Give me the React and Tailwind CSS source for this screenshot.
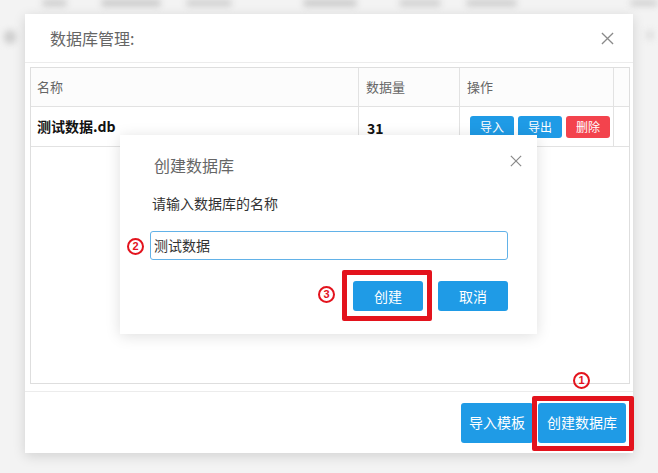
import React from "react";

const cjk = { fontFamily: '"Noto Sans CJK SC", "Noto Sans", sans-serif' };

function CloseIcon({ size = 14 }) {
  return (
    <svg width={size} height={size} viewBox="0 0 14 14" fill="none" stroke="#8a8a8a" strokeWidth="1.4">
      <path d="M1 1L13 13M13 1L1 13" />
    </svg>
  );
}

function SmallButton({ children, danger }) {
  return (
    <button
      className={`h-[22px] w-[44px] rounded-[3px] text-[12px] text-white leading-none ${
        danger ? "bg-[#f3434d]" : "bg-[#1f9be6]"
      }`}
    >
      {children}
    </button>
  );
}

// red annotation frame drawn over a control
function Mark({ className }) {
  return <div className={`absolute border-[5px] border-[#e3131d] rounded-[2px] pointer-events-none ${className}`} />;
}

// circled step number
function Step({ children, className }) {
  return (
    <span
      className={`absolute w-[17px] h-[17px] rounded-full border-2 border-[#e3131d] flex items-center justify-center text-[11px] font-bold leading-none text-[#e3131d] ${className}`}
      style={{ fontFamily: '"Liberation Sans", Arial, sans-serif' }}
    >
      {children}
    </span>
  );
}

export default function App() {
  return (
    <div className="relative w-[658px] h-[473px] overflow-hidden bg-[#f3f3f3]" style={cjk}>
      {/* blurred page behind the dialog */}
      <div className="flex flex-col gap-[22px] blur-[3px]">
        <div className="flex items-start h-[8px]">
          <div className="ml-[42px] w-[25px] h-[6px] bg-[#c9c9c9] rounded" />
          <div className="ml-[34px] w-[60px] h-[6px] bg-[#c4c4c4] rounded" />
          <div className="ml-[25px] w-[46px] h-[6px] bg-[#cbcbcb] rounded" />
          <div className="ml-[71px] w-[55px] h-[6px] bg-[#c4c4c4] rounded" />
          <div className="ml-[42px] w-[42px] h-[6px] bg-[#cbcbcb] rounded" />
          <div className="ml-[25px] w-[51px] h-[6px] bg-[#c9c9c9] rounded" />
          <div className="ml-[113px] w-[28px] h-[6px] bg-[#cfcfcf] rounded" />
        </div>
        <div className="flex justify-between px-[4px]">
          <div className="w-[12px] h-[14px] bg-[#cdcdcd] rounded-full" />
          <div className="w-[8px] h-[10px] bg-[#dedede] rounded-full" />
        </div>
      </div>

      {/* database manager window */}
      <div className="absolute left-[25px] top-[14px] w-[608px] h-[439px] bg-white flex flex-col shadow-[0_3px_12px_rgba(0,0,0,0.14)]">
        <div className="h-[49px] shrink-0 flex items-center justify-between pl-[25px] pr-[19px] border-b border-[#ececec]">
          <span className="text-[16px] text-[#666]">数据库管理:</span>
          <CloseIcon size={13} />
        </div>

        <div className="flex-1 pt-[4px] pb-[7px] pl-[5px] pr-[3px]">
          <div className="h-full border border-[#dedede] text-[13px]">
            <div className="flex h-[39px] border-b border-[#e2e2e2] text-[#666] bg-[#fcfcfc]">
              <div className="w-[328px] flex items-center pl-[6px] border-r border-[#e2e2e2]">名称</div>
              <div className="w-[101px] flex items-center pl-[7px] border-r border-[#e2e2e2]">数据量</div>
              <div className="w-[154px] flex items-center pl-[7px] border-r border-[#e2e2e2]">操作</div>
              <div className="flex-1" />
            </div>
            <div className="flex h-[40px] border-b border-[#e2e2e2] font-bold text-[#111]">
              <div className="w-[328px] flex items-center pl-[6px] border-r border-[#e2e2e2] text-[14px]">测试数据.db</div>
              <div className="w-[101px] flex items-center pl-[8px] pt-[3px] border-r border-[#e2e2e2] text-[14px]">31</div>
              <div className="w-[154px] flex items-center gap-[4px] pl-[10px] border-r border-[#e2e2e2] font-normal">
                <SmallButton>导入</SmallButton>
                <SmallButton>导出</SmallButton>
                <SmallButton danger>删除</SmallButton>
              </div>
              <div className="flex-1" />
            </div>
          </div>
        </div>

        <div className="h-[62px] shrink-0 border-t border-[#ececec] flex items-center justify-end gap-[5px] pr-[7px] text-[14px] text-white">
          <button className="h-[40px] w-[72px] rounded-[3px] bg-[#1f9be6]">导入模板</button>
          <button className="h-[40px] w-[88px] rounded-[3px] bg-[#1f9be6]">创建数据库</button>
        </div>
      </div>

      {/* create database prompt */}
      <div className="absolute left-[120px] top-[135px] w-[417px] h-[199px] bg-white flex flex-col shadow-[0_2px_14px_rgba(0,0,0,0.13)]">
        <div className="flex items-start justify-between pl-[34px] pr-[15px] pt-[19px]">
          <span className="text-[16px] text-[#666] leading-[22px]">创建数据库</span>
          <div className="pt-[1px]">
            <CloseIcon size={12} />
          </div>
        </div>
        <div className="pl-[32px] pt-[17px] text-[14px] text-[#333] leading-[20px]">请输入数据库的名称</div>
        <div className="pl-[30px] pt-[18px]">
          <div className="w-[358px] h-[29px] border border-[#62b2e8] rounded-[3px] flex items-center pl-[3px] text-[14px] text-[#333]">
            测试数据
          </div>
        </div>
        <div className="flex justify-end gap-[15px] pr-[29px] pt-[21px] text-[14px] text-white">
          <button className="h-[30px] w-[70px] rounded-[3px] bg-[#1f9be6]">创建</button>
          <button className="h-[30px] w-[70px] rounded-[3px] bg-[#1f9be6]">取消</button>
        </div>
      </div>

      {/* annotations */}
      <Mark className="left-[532px] top-[396px] w-[102px] h-[55px]" />
      <Mark className="left-[342px] top-[270px] w-[90px] h-[51px]" />
      <Step className="left-[573px] top-[372px]">1</Step>
      <Step className="left-[127px] top-[238px]">2</Step>
      <Step className="left-[318px] top-[286px]">3</Step>
    </div>
  );
}
